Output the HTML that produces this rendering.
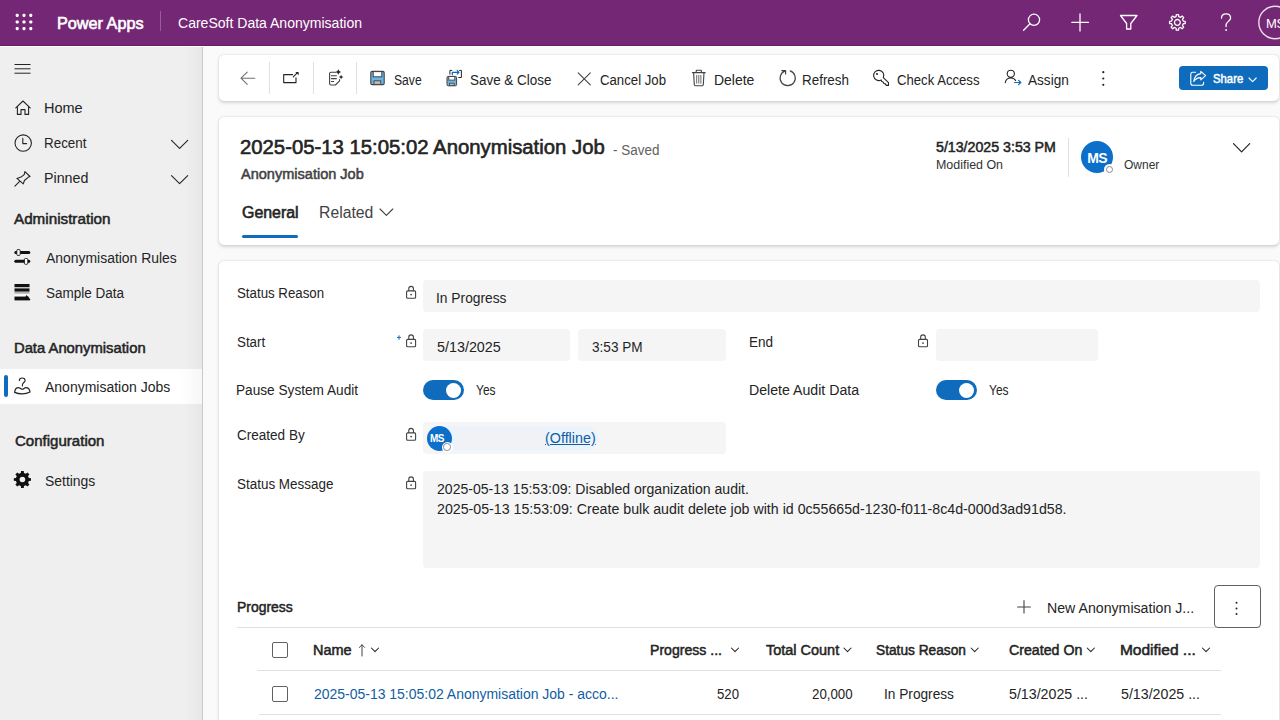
<!DOCTYPE html>
<html><head><meta charset="utf-8">
<style>
*{margin:0;padding:0;box-sizing:border-box}
html,body{width:1280px;height:720px;overflow:hidden;background:#fafafa;font-family:"Liberation Sans",sans-serif}
.a{position:absolute}
.t{position:absolute;white-space:nowrap;line-height:1;font-family:"Liberation Sans",sans-serif}
svg{position:absolute;overflow:visible}
#top{box-sizing:content-box;left:0;top:0;width:1280px;height:45px;background:#742774;border-bottom:1px solid #6b1d6b}
#topline{left:0;top:46px;width:1280px;height:1px;background:#fff}
#side{left:0;top:47px;width:202px;height:673px;background:#efefef}
#sideedge{left:202px;top:47px;width:1px;height:673px;background:#c9c9c9}
#sideshadow{left:184px;top:47px;width:18px;height:673px;background:linear-gradient(to right,rgba(0,0,0,0),rgba(0,0,0,0.035))}
.card{position:absolute;background:#fff;border-radius:5px;box-shadow:0 0 2px rgba(0,0,0,.12),0 1.5px 3.5px rgba(0,0,0,.14)}
.box{position:absolute;background:#f5f5f5;border-radius:4px}
.sep{position:absolute;width:1px;background:#e0e0e0}
.hl{position:absolute;height:1px;background:#e0e0e0}
</style></head>
<body>
<div id="top" class="a"></div>
<div id="topline" class="a"></div>
<div id="side" class="a"></div>
<div id="sideshadow" class="a"></div>
<div id="sideedge" class="a"></div>
<!-- selected nav row -->
<div class="a" style="left:0;top:369px;width:202px;height:35px;background:linear-gradient(to right,#fff 0,#fff 180px,#f7f7f7 202px)"></div>
<div class="a" style="left:4px;top:375px;width:4px;height:22px;background:#0f6cbd;border-radius:2px"></div>

<!-- cards -->
<div class="card" style="left:219px;top:55px;width:1060px;height:46px"></div>
<div class="card" style="left:219px;top:117px;width:1060px;height:128px"></div>
<div class="card" style="left:219px;top:261px;width:1060px;height:470px"></div>

<!-- toolbar separators -->
<div class="sep" style="left:269px;top:62px;height:32px"></div>
<div class="sep" style="left:313px;top:62px;height:32px"></div>
<div class="sep" style="left:356px;top:62px;height:32px"></div>
<!-- share button -->
<div class="a" style="left:1179px;top:66px;width:89px;height:24px;background:#0f6cbd;border-radius:4px"></div>

<!-- header card extras -->
<div class="sep" style="left:1068px;top:138px;height:39px"></div>
<div class="a" style="left:1081px;top:141px;width:32px;height:32px;border-radius:50%;background:#0c6fca"></div>
<div class="a" style="left:1103.5px;top:163.5px;width:11.6px;height:11.6px;border-radius:50%;background:#fff"></div>
<div class="a" style="left:1105.5px;top:165.5px;width:7.6px;height:7.6px;border-radius:50%;background:#fff;border:1.4px solid #8a8a8a"></div>
<div class="a" style="left:242px;top:235px;width:56px;height:3px;border-radius:2px;background:#0f6cbd"></div>

<!-- form boxes -->
<div class="box" style="left:423px;top:280px;width:837px;height:32px"></div>
<div class="box" style="left:423px;top:329px;width:147px;height:32px"></div>
<div class="box" style="left:578px;top:329px;width:148px;height:32px"></div>
<div class="box" style="left:936px;top:329px;width:162px;height:32px"></div>
<div class="box" style="left:423px;top:422px;width:303px;height:32px"></div>
<div class="box" style="left:423px;top:471px;width:837px;height:97px"></div>
<!-- created by pill -->
<div class="a" style="left:428px;top:426px;width:170px;height:24px;border-radius:12px;background:#ebf3fc"></div>
<div class="a" style="left:457px;top:429px;width:88px;height:19px;background:#f0f2f5"></div>
<div class="a" style="left:427px;top:426px;width:25px;height:25px;border-radius:50%;background:#0c6fca"></div>
<div class="a" style="left:441.5px;top:441.5px;width:11px;height:11px;border-radius:50%;background:#fff"></div>
<div class="a" style="left:443.2px;top:443.2px;width:7.6px;height:7.6px;border-radius:50%;background:#fff;border:1.3px solid #8a8a8a"></div>

<!-- toggles -->
<div class="a" style="left:423px;top:380px;width:41px;height:20px;border-radius:10px;background:#0f6cbd"></div>
<div class="a" style="left:446px;top:382.5px;width:15px;height:15px;border-radius:50%;background:#fff"></div>
<div class="a" style="left:936px;top:380px;width:41px;height:20px;border-radius:10px;background:#0f6cbd"></div>
<div class="a" style="left:959px;top:382.5px;width:15px;height:15px;border-radius:50%;background:#fff"></div>

<!-- grid -->
<div class="hl" style="left:237px;top:627px;width:1023px"></div>
<div class="hl" style="left:257px;top:670px;width:964px"></div>
<div class="hl" style="left:259px;top:714px;width:962px"></div>
<div class="a" style="left:272px;top:642px;width:16px;height:16px;border:1px solid #616161;border-radius:2px"></div>
<div class="a" style="left:272px;top:686px;width:16px;height:16px;border:1px solid #616161;border-radius:2px"></div>
<div class="a" style="left:1214px;top:585px;width:47px;height:43px;border:1px solid #616161;border-radius:4px;background:#fff"></div>

<svg width="1280" height="720" style="left:0;top:0" viewBox="0 0 1280 720" fill="none">
<!-- waffle -->
<g fill="#fff"><rect x="15.65" y="13.85" width="3.1" height="3.1" rx="1.1"/><rect x="22.45" y="13.85" width="3.1" height="3.1" rx="1.1"/><rect x="29.25" y="13.85" width="3.1" height="3.1" rx="1.1"/><rect x="15.65" y="20.45" width="3.1" height="3.1" rx="1.1"/><rect x="22.45" y="20.45" width="3.1" height="3.1" rx="1.1"/><rect x="29.25" y="20.45" width="3.1" height="3.1" rx="1.1"/><rect x="15.65" y="27.05" width="3.1" height="3.1" rx="1.1"/><rect x="22.45" y="27.05" width="3.1" height="3.1" rx="1.1"/><rect x="29.25" y="27.05" width="3.1" height="3.1" rx="1.1"/></g>
<line x1="160.5" y1="11" x2="160.5" y2="31" stroke="#9a5c9a" stroke-width="1"/>
<!-- header right icons -->
<g stroke="#fff" stroke-width="1.3" stroke-linecap="round">
<circle cx="1034" cy="19.8" r="5.6"/>
<line x1="1030" y1="23.8" x2="1023.6" y2="30.2"/>
<line x1="1080" y1="14" x2="1080" y2="31"/>
<line x1="1071.8" y1="22.3" x2="1088.5" y2="22.3"/>
<path d="M1120.5 15.5 H1137 L1130.8 23.5 V29 H1126.6 V23.5 Z" stroke-linejoin="round"/>
<path d="M1221.5 18.2 C1221.5 15.2 1223.6 13.9 1226 13.9 C1228.6 13.9 1230.6 15.5 1230.6 18 C1230.6 20.8 1227 21.5 1226.1 24.2 V26.6"/>
</g>
<circle cx="1226.1" cy="30" r="0.9" fill="#fff"/>
<!-- gear header -->
<g transform="translate(1177.4 22.4)" stroke="#fff" stroke-width="1.3" stroke-linejoin="round">
<path d="M5.86 -1.31 L7.82 -1.11 L7.82 1.11 L5.86 1.31 L5.07 3.21 L6.32 4.74 L4.74 6.32 L3.21 5.07 L1.31 5.86 L1.11 7.82 L-1.11 7.82 L-1.31 5.86 L-3.21 5.07 L-4.74 6.32 L-6.32 4.74 L-5.07 3.21 L-5.86 1.31 L-7.82 1.11 L-7.82 -1.11 L-5.86 -1.31 L-5.07 -3.21 L-6.32 -4.74 L-4.74 -6.32 L-3.21 -5.07 L-1.31 -5.86 L-1.11 -7.82 L1.11 -7.82 L1.31 -5.86 L3.21 -5.07 L4.74 -6.32 L6.32 -4.74 L5.07 -3.21 Z"/>
<circle r="2.9"/>
</g>
<!-- avatar header -->
<circle cx="1275" cy="22.5" r="16.2" stroke="#fff" stroke-opacity="0.85" stroke-width="1.4"/>

<!-- sidebar icons -->
<g stroke="#242424" stroke-width="1.1" stroke-linecap="round" stroke-linejoin="round">
<g stroke-linecap="butt" stroke-width="1"><line x1="14.5" y1="64.5" x2="30.5" y2="64.5"/><line x1="14.5" y1="68.8" x2="30.5" y2="68.8"/><line x1="14.5" y1="73.2" x2="30.5" y2="73.2"/></g>
<!-- home -->
<path d="M15.8 107.8 L23 101 L30.2 107.8 M17.4 106.4 V114.4 H21 V109.6 H25 V114.4 H28.6 V106.4"/>
<!-- clock -->
<circle cx="23.2" cy="143.1" r="8.2"/>
<path d="M22.8 138.4 V143.6 H26.6"/>
<!-- pin -->
<path d="M16.9 178.4 L21 177.1 L24.2 174.6 L24.9 171.6 L30 176.5 L28.1 177.3 L24.4 180.5 L23.3 183.9 Z M19.7 181.4 L14.9 186.2"/>
<!-- chevrons -->
<path d="M171.5 140.3 L179.6 148.3 L187.7 140.3"/>
<path d="M171.5 175.6 L179.6 183.6 L187.7 175.6"/>
<!-- jobs icon -->
<path d="M19.3 380.6 C19.3 378.9 20.6 378 22.2 378 C23.8 378 25.1 378.9 25.1 380.4 C25.1 382.3 22.4 382.8 22.4 385 V386"/>
<path d="M14.6 392.4 C14.9 389.5 16.6 387.6 18.5 387.6 C20 387.6 21 389.2 22.3 389.2 C23.6 389.2 24.5 387.6 26 387.6 C28 387.6 29.7 389.6 30 392 C27 393.6 24.5 393.9 22.3 393.9 C19.8 393.9 17.2 393.6 14.6 392.4 Z" stroke-width="1.2"/>
</g>

<!-- rules icon -->
<g fill="#111">
<rect x="14.3" y="251" width="16" height="3" rx="1.5"/>
<rect x="14.3" y="259.7" width="16" height="3" rx="1.5"/>
<rect x="16.8" y="249.6" width="3.4" height="5.8" rx="1" fill="#fff" stroke="#111" stroke-width="0.9"/>
<rect x="24.4" y="258.5" width="3.4" height="5.8" rx="1" fill="#fff" stroke="#111" stroke-width="0.9"/>
</g>
<!-- sample data -->
<g fill="#111">
<rect x="14.5" y="284" width="15" height="3.2"/>
<rect x="14.5" y="288.4" width="15" height="3.2"/>
<rect x="14.5" y="292.4" width="15" height="1" fill="#888"/>
<rect x="14.5" y="294.4" width="15" height="1.2" fill="#fff"/>
<rect x="14.5" y="296.6" width="14" height="3.8"/>
<path d="M26.5 295 L30.5 299.5 L29 300.8 L25.5 296.5 Z"/>
</g>
<!-- settings filled gear -->
<g transform="translate(22.4 479.5)">
<path fill="#111" d="M6.41 -1.59 L8.59 -1.36 L8.59 1.36 L6.41 1.59 L5.65 3.40 L7.04 5.11 L5.11 7.04 L3.40 5.65 L1.59 6.41 L1.36 8.59 L-1.36 8.59 L-1.59 6.41 L-3.40 5.65 L-5.11 7.04 L-7.04 5.11 L-5.65 3.40 L-6.41 1.59 L-8.59 1.36 L-8.59 -1.36 L-6.41 -1.59 L-5.65 -3.40 L-7.04 -5.11 L-5.11 -7.04 L-3.40 -5.65 L-1.59 -6.41 L-1.36 -8.59 L1.36 -8.59 L1.59 -6.41 L3.40 -5.65 L5.11 -7.04 L7.04 -5.11 L5.65 -3.40 Z"/>
<circle r="2.8" fill="#efefef"/>
</g>

<!-- toolbar icons -->
<g stroke="#616161" stroke-width="1.1" stroke-linecap="round" stroke-linejoin="round">
<path d="M247.2 72.2 L241 78.2 L247.2 84.3 M241.2 78.2 H254.8" stroke="#707070"/>
<path d="M292.6 74.6 H283.7 V82.6 H296 V77.8 M293.3 76.8 L297.2 72.9" stroke="#242424"/>
</g>
<!-- notes sparkle -->
<path d="M295.4 72 H298.6 V75.2 Z" fill="#242424"/>
<g stroke="#424242" stroke-width="1.1" stroke-linejoin="round" stroke-linecap="round">
<path d="M335.6 72.2 H331 C330.1 72.2 329.6 72.7 329.6 73.6 V83.6 C329.6 84.5 330.1 85 331 85 H335.4 L339.6 80.8 V79.6"/>
<line x1="331.4" y1="75.8" x2="336.4" y2="75.8"/><line x1="331.4" y1="78.6" x2="336.4" y2="78.6"/><line x1="331.4" y1="81.5" x2="333.6" y2="81.5"/>
</g>
<path fill="#242424" d="M338.3 69.2 L339.2 71.1 L341.1 72 L339.2 72.9 L338.3 74.8 L337.40000000000003 72.9 L335.5 72 L337.40000000000003 71.1 Z M341.1 74.89999999999999 L341.85 76.35 L343.3 77.1 L341.85 77.85 L341.1 79.3 L340.35 77.85 L338.90000000000003 77.1 L340.35 76.35 Z"/>
<!-- save icon -->
<rect x="370.8" y="71.4" width="13.4" height="13.2" rx="1.4" fill="#6cb4e6" stroke="#424242" stroke-width="1.1"/>
<rect x="373.2" y="71.6" width="8.6" height="5.2" fill="#fff" stroke="#424242" stroke-width="1"/>
<rect x="374" y="80.8" width="6.8" height="3.6" fill="#bdbdbd" stroke="#424242" stroke-width="0.9"/>
<!-- save & close -->
<rect x="447" y="76.4" width="9.6" height="9.4" rx="1.2" fill="#6cb4e6" stroke="#424242" stroke-width="1"/>
<rect x="448.8" y="76.5" width="6" height="3.6" fill="#fff" stroke="#424242" stroke-width="0.9"/>
<rect x="449.4" y="83.2" width="4.8" height="2.4" fill="#bdbdbd" stroke="#424242" stroke-width="0.8"/>
<path d="M449.9 74.6 V70.4 H452.2 M459.2 70.4 H461.4 V77.5 H458.4" stroke="#242424" stroke-width="1" fill="none"/>
<path d="M452.3 74.8 V72.3 H459 M457.2 70.5 L459 72.3 L457.2 74.1" stroke="#0f6cbd" stroke-width="1.2" fill="none" stroke-linecap="round" stroke-linejoin="round"/>
<!-- X cancel -->
<path d="M578.2 72.8 L590.3 84.8 M590.3 72.8 L578.2 84.8" stroke="#424242" stroke-width="1.1" stroke-linecap="round"/>
<!-- trash -->
<g stroke="#424242" stroke-width="1.1" stroke-linejoin="round" stroke-linecap="round">
<path d="M692.4 72.6 H705.2 M696.2 72.6 V71 C696.2 70.6 696.5 70.3 696.9 70.3 H700.7 C701.1 70.3 701.4 70.6 701.4 71 V72.6 M693.6 72.6 L694.3 84.6 C694.3 85.2 694.8 85.7 695.4 85.7 H702.2 C702.8 85.7 703.3 85.2 703.3 84.6 L704 72.6"/>
<path d="M696.7 75.4 V83.2 M698.8 75.4 V83.2 M700.9 75.4 V83.2" stroke-width="0.8"/>
</g>
<!-- refresh -->
<path d="M790.2 70.9 A7.6 7.6 0 1 1 785.2 70.9 M781.8 70.6 H785.6 V74" stroke="#424242" stroke-width="1.15" fill="none" stroke-linecap="round" stroke-linejoin="round"/>
<!-- key -->
<path d="M883.3 77.7 L888.5 82.7 V85.4 H886.3 L885.4 83.9 L883.9 83.5 L883.1 81.9 L881.7 81.4 L881.2 79.9 A5.1 5.1 0 1 1 883.3 77.7 Z" stroke="#242424" stroke-width="1.1" fill="none" stroke-linejoin="round"/>
<circle cx="877" cy="73.9" r="1" fill="#242424"/>
<!-- assign -->
<g stroke="#242424" stroke-width="1.1" fill="none" stroke-linecap="round">
<circle cx="1010.8" cy="73.8" r="3.6"/>
<path d="M1005.3 82.6 C1005.8 79.8 1008 78 1010.8 78 C1013 78 1014.7 79 1015.6 80.6"/>
</g>
<path d="M1014.6 82.5 H1020.8 M1018.6 80.3 L1020.8 82.5 L1018.6 84.7" stroke="#0f6cbd" stroke-width="1.2" fill="none" stroke-linecap="round" stroke-linejoin="round"/>
<!-- more vertical -->
<g fill="#242424"><circle cx="1103.3" cy="72.2" r="1.1"/><circle cx="1103.3" cy="78.5" r="1.1"/><circle cx="1103.3" cy="84.8" r="1.1"/></g>
<!-- share icon -->
<g stroke="#fff" stroke-width="1.1" fill="none" stroke-linecap="round" stroke-linejoin="round">
<path d="M1195.5 72.2 H1192.8 C1191.4 72.2 1190.8 73 1190.8 74.2 V83.2 C1190.8 84.5 1191.5 85.2 1192.8 85.2 H1201.6 C1203 85.2 1203.6 84.5 1203.6 83.2 V82.3"/>
<path d="M1200.8 71.4 L1205.6 75.6 L1200.8 79.8 V77.6 C1197.8 77.6 1195.4 78.6 1193.8 81.6 C1194.2 77.4 1196.4 74 1200.8 73.6 Z"/>
<path d="M1249 78 L1252.6 81.6 L1256.2 78"/>
</g>

<!-- header card -->
<path d="M1233.5 143.6 L1241.6 151.8 L1249.7 143.6" stroke="#242424" stroke-width="1.2" fill="none" stroke-linecap="round" stroke-linejoin="round"/>
<path d="M380 209 L386.4 215.4 L392.8 209" stroke="#424242" stroke-width="1.1" fill="none" stroke-linecap="round" stroke-linejoin="round"/>

<!-- locks -->
<g stroke="#424242" stroke-width="1.1" fill="none" stroke-linejoin="round">
<g id="lk"><rect x="406.6" y="290.9" width="9" height="7.4" rx="1"/><path d="M408.8 290.9 V288.6 C408.8 287.2 409.8 286.4 411.1 286.4 C412.4 286.4 413.4 287.2 413.4 288.6 V290.9"/></g>
<use href="#lk" y="48.5"/>
<use href="#lk" x="511.9" y="48.5"/>
<use href="#lk" y="142"/>
<use href="#lk" y="190.5"/>
</g>
<g fill="#424242">
<circle cx="411.1" cy="294.6" r="0.9"/><circle cx="411.1" cy="343.1" r="0.9"/><circle cx="923" cy="343.1" r="0.9"/><circle cx="411.1" cy="436.6" r="0.9"/><circle cx="411.1" cy="485.1" r="0.9"/>
</g>
<path d="M399 335.4 V339.8 M397 337.4 H401" stroke="#0f6cbd" stroke-width="1"/>

<!-- grid icons -->
<path d="M362 644.8 V656 M359.4 647.4 L362 644.8 L364.6 647.4" stroke="#424242" stroke-width="1" fill="none" stroke-linecap="round" stroke-linejoin="round"/>
<g stroke="#242424" stroke-width="1.05" fill="none" stroke-linecap="round" stroke-linejoin="round">
<path d="M371.4 648 L375 651.6 L378.6 648"/>
<path d="M731.4 648 L735 651.6 L738.6 648"/>
<path d="M843.9 648 L847.5 651.6 L851.1 648"/>
<path d="M971.1 648 L974.7 651.6 L978.3 648"/>
<path d="M1087.2 648 L1090.8 651.6 L1094.4 648"/>
<path d="M1202.4 648 L1206 651.6 L1209.6 648"/>
</g>
<path d="M1024 600.3 V613.5 M1017.2 607 H1030.8" stroke="#424242" stroke-width="1.1"/>
<g fill="#242424"><circle cx="1236.5" cy="602.8" r="1"/><circle cx="1236.5" cy="608.4" r="1"/><circle cx="1236.5" cy="614" r="1"/></g>
</svg>
<span class="t" style="left:1266px;top:17px;font-size:13px;font-weight:400;color:#fff;letter-spacing:-0.3px">MS</span>
<span class="t" style="left:1087.3px;top:150.5px;font-size:14px;font-weight:700;color:#fff;letter-spacing:-0.6px">MS</span>
<span class="t" style="left:430px;top:433.5px;font-size:10px;font-weight:700;color:#fff;letter-spacing:-0.6px">MS</span>


<span class="t" style="-webkit-text-stroke:0.6px #fff;left:56.50px;top:15.96px;font-size:16px;font-weight:400;color:#fff;transform-origin:1.00px 0;transform:scaleX(1.0145);">Power Apps</span>
<span class="t" style="left:178.00px;top:16.15px;font-size:14px;font-weight:400;color:#fff;transform-origin:0.00px 0;transform:scaleX(1.0020);">CareSoft Data Anonymisation</span>
<span class="t" style="left:393.50px;top:72.55px;font-size:14px;font-weight:400;color:#242424;transform-origin:0.00px 0;transform:scaleX(0.8654);">Save</span>
<span class="t" style="left:470.00px;top:72.55px;font-size:14px;font-weight:400;color:#242424;transform-origin:0.00px 0;transform:scaleX(0.9596);">Save &amp; Close</span>
<span class="t" style="left:599.80px;top:72.55px;font-size:14px;font-weight:400;color:#242424;transform-origin:0.00px 0;transform:scaleX(0.9423);">Cancel Job</span>
<span class="t" style="left:713.80px;top:72.55px;font-size:14px;font-weight:400;color:#242424;transform-origin:1.00px 0;transform:scaleX(0.9979);">Delete</span>
<span class="t" style="left:802.20px;top:72.55px;font-size:14px;font-weight:400;color:#242424;transform-origin:1.00px 0;transform:scaleX(0.9569);">Refresh</span>
<span class="t" style="left:896.60px;top:72.55px;font-size:14px;font-weight:400;color:#242424;transform-origin:0.00px 0;transform:scaleX(0.9380);">Check Access</span>
<span class="t" style="left:1028.20px;top:72.55px;font-size:14px;font-weight:400;color:#242424;transform-origin:0.00px 0;transform:scaleX(0.9701);">Assign</span>
<span class="t" style="-webkit-text-stroke:0.5px #fff;left:1212.50px;top:72.30px;font-size:13px;font-weight:400;color:#fff;transform-origin:0.00px 0;transform:scaleX(0.8706);">Share</span>
<span class="t" style="-webkit-text-stroke:0.6px #242424;left:240.25px;top:137.47px;font-size:20px;font-weight:400;color:#242424;transform-origin:1.00px 0;transform:scaleX(1.0156);">2025-05-13 15:05:02 Anonymisation Job</span>
<span class="t" style="left:613.40px;top:142.55px;font-size:14px;font-weight:400;color:#616161;transform-origin:0.00px 0;transform:scaleX(0.9608);">- Saved</span>
<span class="t" style="-webkit-text-stroke:0.5px #424242;left:241.00px;top:166.55px;font-size:14px;font-weight:400;color:#424242;transform-origin:0.00px 0;transform:scaleX(1.0379);">Anonymisation Job</span>
<span class="t" style="-webkit-text-stroke:0.5px #242424;left:935.80px;top:139.55px;font-size:14px;font-weight:400;color:#242424;transform-origin:0.00px 0;transform:scaleX(1.0132);">5/13/2025 3:53 PM</span>
<span class="t" style="left:936.00px;top:159.14px;font-size:12px;font-weight:400;color:#323232;transform-origin:0.00px 0;transform:scaleX(1.0355);">Modified On</span>
<span class="t" style="left:1124.00px;top:159.14px;font-size:12px;font-weight:400;color:#323232;transform-origin:0.00px 0;transform:scaleX(0.9987);">Owner</span>
<span class="t" style="-webkit-text-stroke:0.6px #242424;left:241.90px;top:204.86px;font-size:16px;font-weight:400;color:#242424;transform-origin:0.00px 0;transform:scaleX(0.9953);">General</span>
<span class="t" style="left:318.50px;top:204.86px;font-size:16px;font-weight:400;color:#424242;transform-origin:1.00px 0;transform:scaleX(0.9840);">Related</span>
<span class="t" style="left:237.00px;top:285.90px;font-size:14px;font-weight:400;color:#242424;transform-origin:0.00px 0;transform:scaleX(0.9490);">Status Reason</span>
<span class="t" style="left:435.75px;top:291.15px;font-size:14px;font-weight:400;color:#242424;transform-origin:1.00px 0;transform:scaleX(0.9846);">In Progress</span>
<span class="t" style="left:237.00px;top:334.65px;font-size:14px;font-weight:400;color:#242424;transform-origin:0.00px 0;transform:scaleX(0.9520);">Start</span>
<span class="t" style="left:436.75px;top:339.90px;font-size:14px;font-weight:400;color:#242424;transform-origin:0.00px 0;transform:scaleX(1.0241);">5/13/2025</span>
<span class="t" style="left:592.00px;top:339.90px;font-size:14px;font-weight:400;color:#242424;transform-origin:0.00px 0;transform:scaleX(0.9713);">3:53 PM</span>
<span class="t" style="left:748.80px;top:334.55px;font-size:14px;font-weight:400;color:#242424;transform-origin:1.00px 0;transform:scaleX(0.9687);">End</span>
<span class="t" style="left:235.70px;top:383.15px;font-size:14px;font-weight:400;color:#242424;transform-origin:1.00px 0;transform:scaleX(0.9739);">Pause System Audit</span>
<span class="t" style="left:476.20px;top:383.15px;font-size:14px;font-weight:400;color:#242424;transform-origin:0.00px 0;transform:scaleX(0.8538);">Yes</span>
<span class="t" style="left:748.80px;top:383.15px;font-size:14px;font-weight:400;color:#242424;transform-origin:1.00px 0;transform:scaleX(1.0106);">Delete Audit Data</span>
<span class="t" style="left:989.00px;top:383.15px;font-size:14px;font-weight:400;color:#242424;transform-origin:0.00px 0;transform:scaleX(0.8538);">Yes</span>
<span class="t" style="left:237.00px;top:428.45px;font-size:14px;font-weight:400;color:#242424;transform-origin:0.00px 0;transform:scaleX(0.9667);">Created By</span>
<span class="t" style="left:544.50px;top:431.15px;font-size:14px;font-weight:400;color:#115ea3;transform-origin:0.00px 0;transform:scaleX(1.0231);text-decoration:underline;">(Offline)</span>
<span class="t" style="left:236.70px;top:476.55px;font-size:14px;font-weight:400;color:#242424;transform-origin:0.00px 0;transform:scaleX(0.9602);">Status Message</span>
<span class="t" style="left:436.60px;top:481.75px;font-size:14px;font-weight:400;color:#242424;transform-origin:0.00px 0;transform:scaleX(1.0043);">2025-05-13 15:53:09: Disabled organization audit.</span>
<span class="t" style="left:436.60px;top:501.65px;font-size:14px;font-weight:400;color:#242424;transform-origin:0.00px 0;transform:scaleX(1.0139);">2025-05-13 15:53:09: Create bulk audit delete job with id 0c55665d-1230-f011-8c4d-000d3ad91d58.</span>
<span class="t" style="-webkit-text-stroke:0.5px #242424;left:237.00px;top:599.65px;font-size:14px;font-weight:400;color:#242424;transform-origin:1.00px 0;transform:scaleX(0.9942);">Progress</span>
<span class="t" style="left:1046.70px;top:600.95px;font-size:14px;font-weight:400;color:#242424;transform-origin:1.00px 0;transform:scaleX(1.0111);">New Anonymisation J...</span>
<span class="t" style="-webkit-text-stroke:0.5px #242424;left:313.00px;top:643.40px;font-size:14px;font-weight:400;color:#242424;transform-origin:1.00px 0;transform:scaleX(1.0340);">Name</span>
<span class="t" style="-webkit-text-stroke:0.5px #242424;left:650.10px;top:643.40px;font-size:14px;font-weight:400;color:#242424;transform-origin:1.00px 0;transform:scaleX(1.0059);">Progress ...</span>
<span class="t" style="-webkit-text-stroke:0.5px #242424;left:765.70px;top:643.40px;font-size:14px;font-weight:400;color:#242424;transform-origin:0.00px 0;transform:scaleX(1.0334);">Total Count</span>
<span class="t" style="-webkit-text-stroke:0.5px #242424;left:876.40px;top:643.40px;font-size:14px;font-weight:400;color:#242424;transform-origin:0.00px 0;transform:scaleX(0.9797);">Status Reason</span>
<span class="t" style="-webkit-text-stroke:0.5px #242424;left:1009.30px;top:643.40px;font-size:14px;font-weight:400;color:#242424;transform-origin:0.00px 0;transform:scaleX(1.0128);">Created On</span>
<span class="t" style="-webkit-text-stroke:0.5px #242424;left:1119.80px;top:643.40px;font-size:14px;font-weight:400;color:#242424;transform-origin:1.00px 0;transform:scaleX(1.1083);">Modified ...</span>
<span class="t" style="left:314.00px;top:686.75px;font-size:14px;font-weight:400;color:#115ea3;transform-origin:0.00px 0;transform:scaleX(0.9978);">2025-05-13 15:05:02 Anonymisation Job - acco...</span>
<span class="t" style="left:717.20px;top:686.75px;font-size:14px;font-weight:400;color:#242424;transform-origin:0.00px 0;transform:scaleX(0.9418);">520</span>
<span class="t" style="left:811.60px;top:686.75px;font-size:14px;font-weight:400;color:#242424;transform-origin:0.00px 0;transform:scaleX(0.9481);">20,000</span>
<span class="t" style="left:883.60px;top:686.75px;font-size:14px;font-weight:400;color:#242424;transform-origin:1.00px 0;transform:scaleX(0.9761);">In Progress</span>
<span class="t" style="left:1009.30px;top:686.75px;font-size:14px;font-weight:400;color:#242424;transform-origin:0.00px 0;transform:scaleX(1.0149);">5/13/2025 ...</span>
<span class="t" style="left:1120.80px;top:686.75px;font-size:14px;font-weight:400;color:#242424;transform-origin:0.00px 0;transform:scaleX(1.0149);">5/13/2025 ...</span>
<span class="t" style="left:44.40px;top:100.65px;font-size:14px;font-weight:400;color:#242424;transform-origin:1.00px 0;transform:scaleX(1.0367);">Home</span>
<span class="t" style="left:44.40px;top:136.15px;font-size:14px;font-weight:400;color:#242424;transform-origin:1.00px 0;transform:scaleX(0.9570);">Recent</span>
<span class="t" style="left:44.40px;top:171.45px;font-size:14px;font-weight:400;color:#242424;transform-origin:1.00px 0;transform:scaleX(1.0190);">Pinned</span>
<span class="t" style="-webkit-text-stroke:0.5px #242424;left:14.40px;top:211.65px;font-size:14px;font-weight:400;color:#242424;transform-origin:0.00px 0;transform:scaleX(1.0874);">Administration</span>
<span class="t" style="left:45.60px;top:250.95px;font-size:14px;font-weight:400;color:#242424;transform-origin:0.00px 0;transform:scaleX(0.9946);">Anonymisation Rules</span>
<span class="t" style="left:45.60px;top:286.25px;font-size:14px;font-weight:400;color:#242424;transform-origin:0.00px 0;transform:scaleX(0.9649);">Sample Data</span>
<span class="t" style="-webkit-text-stroke:0.5px #242424;left:13.60px;top:341.05px;font-size:14px;font-weight:400;color:#242424;transform-origin:1.00px 0;transform:scaleX(1.0575);">Data Anonymisation</span>
<span class="t" style="left:45.30px;top:380.05px;font-size:14px;font-weight:400;color:#242424;transform-origin:0.00px 0;transform:scaleX(0.9993);">Anonymisation Jobs</span>
<span class="t" style="-webkit-text-stroke:0.5px #242424;left:14.60px;top:434.35px;font-size:14px;font-weight:400;color:#242424;transform-origin:0.00px 0;transform:scaleX(1.0741);">Configuration</span>
<span class="t" style="left:45.30px;top:473.95px;font-size:14px;font-weight:400;color:#242424;transform-origin:0.00px 0;transform:scaleX(0.9943);">Settings</span>
</body></html>
